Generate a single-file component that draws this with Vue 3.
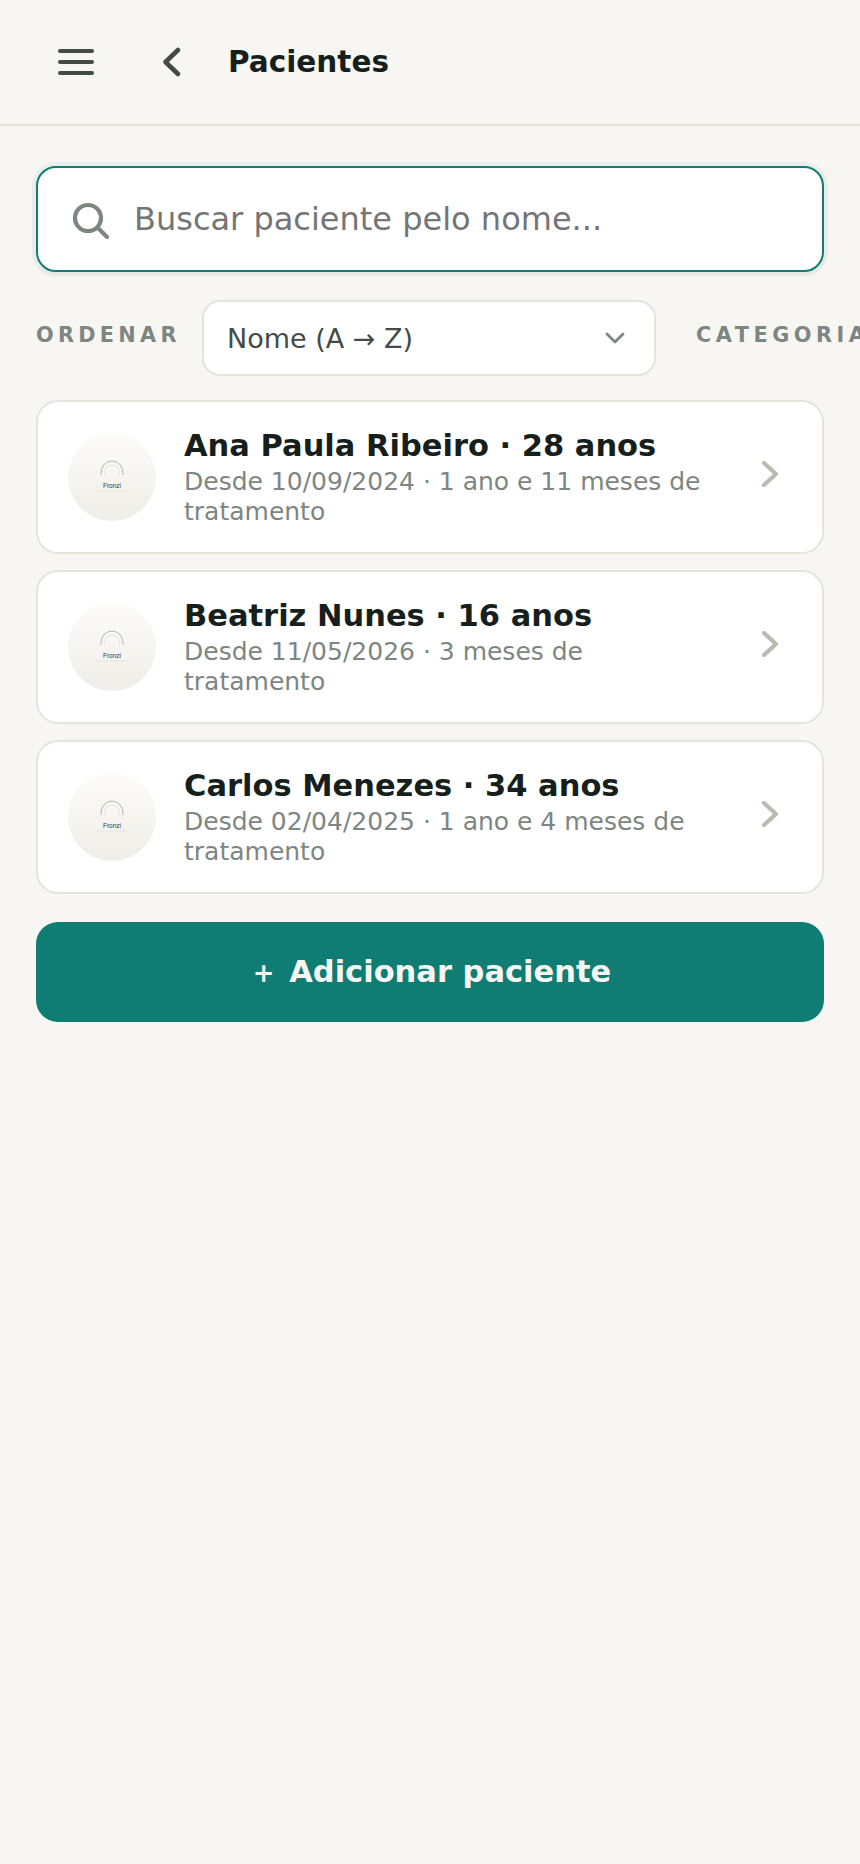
<script setup>
const patients = [
  { name: 'Ana Paula Ribeiro · 28 anos', since: 'Desde 10/09/2024 · 1 ano e 11 meses de tratamento' },
  { name: 'Beatriz Nunes · 16 anos', since: 'Desde 11/05/2026 · 3 meses de tratamento' },
  { name: 'Carlos Menezes · 34 anos', since: 'Desde 02/04/2025 · 1 ano e 4 meses de tratamento' },
]
</script>

<template>
  <div class="page">
    <header class="topbar">
      <svg class="menu-icon" width="38" height="28" viewBox="0 0 38 28" fill="none">
        <path d="M3 3h32M3 14h32M3 25h32" stroke="#424b46" stroke-width="4" stroke-linecap="round" />
      </svg>
      <svg class="back-icon" width="20" height="32" viewBox="0 0 20 32" fill="none">
        <path d="M16 4 3.500 16 16 28" stroke="#424b46" stroke-width="4.600" stroke-linecap="round" stroke-linejoin="round" />
      </svg>
      <h1 class="title">Pacientes</h1>
    </header>

    <main class="content">
      <div class="search">
        <svg class="search-icon" width="38" height="38" viewBox="0 0 38 38" fill="none">
          <circle cx="16" cy="16" r="13" stroke="#7d8681" stroke-width="4.200" />
          <path d="m26 26 9 9" stroke="#7d8681" stroke-width="4.200" stroke-linecap="round" />
        </svg>
        <span class="placeholder">Buscar paciente pelo nome...</span>
      </div>

      <div class="filters">
        <span class="filter-label">ORDENAR</span>
        <div class="select">
          <span>Nome (A → Z)</span>
          <svg width="20" height="12" viewBox="0 0 20 12" fill="none">
            <path d="m2 2 8 8 8-8" stroke="#7d8681" stroke-width="2.800" stroke-linecap="round" stroke-linejoin="round" />
          </svg>
        </div>
        <span class="filter-label second">CATEGORIA</span>
      </div>

      <div class="list">
        <div v-for="p in patients" :key="p.name" class="card">
          <div class="avatar">
            <svg width="88" height="88" viewBox="0 0 88 88" fill="none">
              <path d="M33 42v-2a11 12 0 0 1 22 0v2" stroke="#8a8780" stroke-width="0.6" />
              <path d="M36.500 42v-2a7.500 8 0 0 1 15 0v2" stroke="#d8d5cf" stroke-width="0.6" />
              <text x="44" y="55" text-anchor="middle" class="avatar-text">Fronzi</text>
              <path d="M28 58h32" stroke="#dedbd5" stroke-width="0.6" />
            </svg>
          </div>
          <div class="info">
            <div class="name">{{ p.name }}</div>
            <div class="since">{{ p.since }}</div>
          </div>
          <svg class="chevron" width="18" height="28" viewBox="0 0 18 28" fill="none">
            <path d="m3 3 12 11L3 25" stroke="#bdbab0" stroke-width="4.200" stroke-linecap="round" stroke-linejoin="round" />
          </svg>
        </div>
      </div>

      <button class="add-btn"><span class="plus">+</span> Adicionar paciente</button>
    </main>
  </div>
</template>

<style>
html, body {
  margin: 0;
  background: #f7f6f2;
}
</style>

<style scoped>
.page {
  width: 860px;
  height: 1864px;
  overflow: hidden;
  background: #f7f6f2;
  font-family: "DejaVu Sans", sans-serif;
}
.topbar {
  display: flex;
  align-items: center;
  height: 124px;
  padding-left: 57px;
  border-bottom: 2px solid #e5e3dc;
}
.menu-icon {
  margin-right: 67px;
}
.back-icon {
  margin-right: 46px;
}
.title {
  margin: 0;
  font-size: 29.500px;
  font-weight: 700;
  color: #161f1c;
}
.content {
  padding: 40px 36px 0;
}
.search {
  display: flex;
  align-items: center;
  gap: 24px;
  box-sizing: border-box;
  height: 106px;
  padding-left: 34px;
  background: #fff;
  border: 2px solid #0f7d74;
  border-radius: 20px;
  box-shadow: 0 0 0 4px rgba(15, 125, 116, 0.06), 0 3px 8px rgba(0, 0, 0, 0.03);
}
.search-icon {
  margin-top: 4px;
}
.placeholder {
  font-size: 32px;
  color: #757575;
}
.filters {
  display: flex;
  align-items: center;
  margin-top: 28px;
  white-space: nowrap;
}
.filter-label {
  flex: none;
  width: 166px;
  margin-top: -7px;
  font-size: 20.800px;
  font-weight: 700;
  letter-spacing: 4.300px;
  color: #7d8681;
}
.filter-label.second {
  margin-left: 40px;
  letter-spacing: 4.500px;
}
.select {
  display: flex;
  align-items: center;
  justify-content: space-between;
  box-sizing: border-box;
  flex: none;
  width: 454px;
  height: 76px;
  padding: 0 29px 0 23px;
  background: #fff;
  border: 2px solid #e5e3dc;
  border-radius: 18px;
  font-size: 27px;
  color: #424b46;
}
.list {
  display: flex;
  flex-direction: column;
  gap: 16px;
  margin-top: 24px;
}
.card {
  display: flex;
  align-items: center;
  box-sizing: border-box;
  height: 154px;
  padding: 0 43px 0 30px;
  background: #fff;
  border: 2px solid #e5e3dc;
  border-radius: 22px;
}
.avatar {
  flex: none;
  width: 88px;
  height: 88px;
  border-radius: 50%;
  background: linear-gradient(180deg, #fdfcfa, #efede7);
  margin-right: 28px;
}
.avatar svg {
  display: block;
}
.avatar-text {
  font-family: "Liberation Sans", sans-serif;
  font-size: 6.500px;
  fill: #333;
}
.info {
  flex: 1;
  min-width: 0;
  margin-top: 1px;
}
.name {
  margin-bottom: 3px;
  font-size: 30.500px;
  font-weight: 700;
  line-height: 36px;
  color: #161f1c;
}
.since {
  font-size: 25px;
  line-height: 30px;
  color: #7d8681;
}
.chevron {
  flex: none;
  margin-left: 38px;
  margin-top: -7px;
}
.add-btn {
  display: block;
  width: 100%;
  height: 100px;
  margin-top: 28px;
  padding: 0 6px 2px 10px;
  border: none;
  border-radius: 22px;
  background: #0f7d74;
  color: #f7f6f2;
  font-family: inherit;
  font-size: 30.500px;
  font-weight: 700;
}
.plus {
  margin-right: 4px;
  font-size: 26px;
}
</style>
